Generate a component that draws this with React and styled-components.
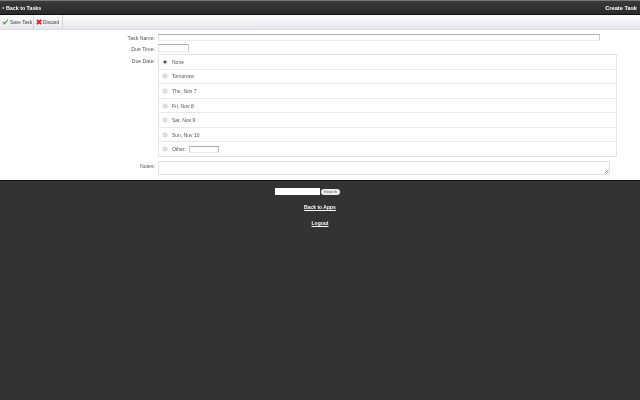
import React from 'react';
import styled, { createGlobalStyle } from 'styled-components';

const GlobalStyle = createGlobalStyle`
    html, body {
        margin: 0;
        padding: 0;
        height: 100%;
        background: #333333;
        font-family: "Liberation Sans", Arial, sans-serif;
    }
`;

const dateOptions = ['None', 'Tomorrow', 'Thu, Nov 7', 'Fri, Nov 8', 'Sat, Nov 9', 'Sun, Nov 10'];

const App = () => {
    return (
        <Page>
            <GlobalStyle />
            <Header>
                <BackLink>
                    <BackArrow />
                    Back to Tasks
                </BackLink>
                <HeaderTitle>Create Task</HeaderTitle>
            </Header>
            <Toolbar>
                <ToolButton $width={34}>
                    <svg width="7" height="6" viewBox="0 0 9 8">
                        <path d="M0.5 4.5 L3.2 7.5 L8.5 1 L7.6 0.4 L3.2 5 L1.6 3.3 Z" fill="#2fa81c" />
                    </svg>
                    Save Task
                </ToolButton>
                <ToolButton $width={29}>
                    <svg width="6" height="6" viewBox="0 0 7 7">
                        <path d="M1 1 L6 6 M6 1 L1 6" stroke="#e0201a" strokeWidth="2.2" />
                    </svg>
                    Discard
                </ToolButton>
            </Toolbar>
            <Form>
                <FormRow>
                    <Label $top={1}>Task Name:</Label>
                    <TextInput $width={442} $height={7} />
                </FormRow>
                <FormRow>
                    <Label $top={2}>Due Time:</Label>
                    <TextInput $width={31} $height={8} />
                </FormRow>
                <FormRow>
                    <Label $top={3}>Due Date:</Label>
                    <DateBox>
                        {dateOptions.map((option, i) => (
                            <DateRow key={option}>
                                <Radio $checked={i === 0} />
                                {option}
                            </DateRow>
                        ))}
                        <DateRow>
                            <Radio />
                            Other:
                            <OtherInput />
                        </DateRow>
                    </DateBox>
                </FormRow>
                <NotesRow>
                    <Label $top={2}>Notes:</Label>
                    <NotesBox>
                        <Grip width="5" height="5" viewBox="0 0 5 5">
                            <path d="M0.5 4.5 L4.5 0.5 M2.5 4.5 L4.5 2.5" stroke="#8a8a8a" strokeWidth="0.8" />
                        </Grip>
                    </NotesBox>
                </NotesRow>
            </Form>
            <Footer>
                <SearchRow>
                    <SearchInput />
                    <SearchButton>Search</SearchButton>
                </SearchRow>
                <FooterLink>Back to Apps</FooterLink>
                <FooterLink>Logout</FooterLink>
            </Footer>
        </Page>
    );
};

export default App;

// the reference is a downscaled capture, so everything is slightly soft
const Page = styled.div`
    display: flex;
    flex-direction: column;
    width: 640px;
    height: 400px;
    overflow: hidden;
    filter: blur(0.3px);
`;

const Header = styled.div`
    display: flex;
    justify-content: space-between;
    align-items: center;
    box-sizing: border-box;
    height: 15px;
    padding: 0 3px 0 2px;
    background: linear-gradient(#3a3a3a, #2a2a2a);
    border-top: 1px solid #777777;
    border-bottom: 1px solid #111111;
    color: #ffffff;
    font-size: 5.3px;
    font-weight: bold;
`;

const BackLink = styled.span`
    display: flex;
    align-items: center;
    gap: 2px;
`;

const BackArrow = styled.span`
    width: 0;
    height: 0;
    border-style: solid;
    border-width: 1.5px 2px 1.5px 0;
    border-color: transparent #ffffff transparent transparent;
`;

const HeaderTitle = styled.span`
    font-size: 5.7px;
`;

const Toolbar = styled.div`
    display: flex;
    box-sizing: border-box;
    height: 15px;
    background: linear-gradient(#ffffff, #e6e6ee);
    border-bottom: 1px solid #dddddd;
`;

const ToolButton = styled.div`
    display: flex;
    align-items: center;
    gap: 1px;
    box-sizing: border-box;
    width: ${(props) => props.$width}px;
    padding-left: 2px;
    border-right: 1px solid #d4d4d4;
    color: #444444;
    font-size: 4.8px;
`;

const Form = styled.div`
    display: flex;
    flex-direction: column;
    gap: 3px;
    box-sizing: border-box;
    height: 150px;
    padding-top: 4px;
    background: #ffffff;
`;

const FormRow = styled.div`
    display: flex;
    align-items: flex-start;
`;

const NotesRow = styled(FormRow)`
    margin-top: 1px;
`;

const Label = styled.div`
    box-sizing: border-box;
    width: 158px;
    padding: ${(props) => props.$top}px 3px 0 0;
    text-align: right;
    color: #555555;
    font-size: 5.2px;
`;

const TextInput = styled.div`
    box-sizing: border-box;
    width: ${(props) => props.$width}px;
    height: ${(props) => props.$height}px;
    background: #ffffff;
    border: 1px solid #ececec;
    border-top-color: #b0b0b0;
    border-left-color: #dddddd;
    border-right-color: #cccccc;
`;

const DateBox = styled.div`
    display: flex;
    flex-direction: column;
    box-sizing: border-box;
    width: 459px;
    height: 103px;
    margin-top: -1px;
    border: 1px solid #e4e4e4;
`;

const DateRow = styled.div`
    display: flex;
    flex: 1;
    align-items: center;
    padding-left: 4px;
    border-bottom: 1px solid #e8e8e8;
    color: #555555;
    font-size: 5px;

    &:last-child {
        border-bottom: none;
    }
`;

const Radio = styled.span`
    flex: none;
    box-sizing: border-box;
    width: 4px;
    height: 4px;
    margin-right: 5px;
    border-radius: 50%;
    background: ${(props) =>
        props.$checked ? 'radial-gradient(circle, #444444 45%, #e4e4e4 60%)' : '#e0e0e0'};
    box-shadow: 0 0 0 0.5px ${(props) => (props.$checked ? '#d8d8d8' : '#d0d0d0')};
`;

const OtherInput = styled.div`
    box-sizing: border-box;
    width: 30px;
    height: 7px;
    margin-left: 3px;
    background: #ffffff;
    border: 1px solid #ececec;
    border-top-color: #a8a8a8;
    border-left-color: #cccccc;
    border-right-color: #c0c0c0;
`;

const NotesBox = styled.div`
    position: relative;
    box-sizing: border-box;
    width: 452px;
    height: 14px;
    border: 1px solid #e4e4e4;
`;

const Grip = styled.svg`
    position: absolute;
    right: 0;
    bottom: 0;
`;

const Footer = styled.div`
    display: flex;
    flex: 1;
    flex-direction: column;
    align-items: center;
    background: #333333;
    border-top: 1px solid #111111;
    color: #ffffff;
`;

const SearchRow = styled.div`
    display: flex;
    align-items: center;
    gap: 1px;
    margin-top: 7px;
    margin-right: 25px;
`;

const SearchInput = styled.div`
    box-sizing: border-box;
    width: 45px;
    height: 7px;
    background: #ffffff;
`;

const SearchButton = styled.div`
    box-sizing: border-box;
    width: 19px;
    height: 6px;
    border-radius: 3px;
    background: #eeeeee;
    color: #555555;
    font-size: 4.2px;
    line-height: 6px;
    text-align: center;
`;

const FooterLink = styled.a`
    margin-top: 9px;
    color: #ffffff;
    font-size: 5px;
    font-weight: bold;
    line-height: 7px;
    text-decoration: underline;
`;
